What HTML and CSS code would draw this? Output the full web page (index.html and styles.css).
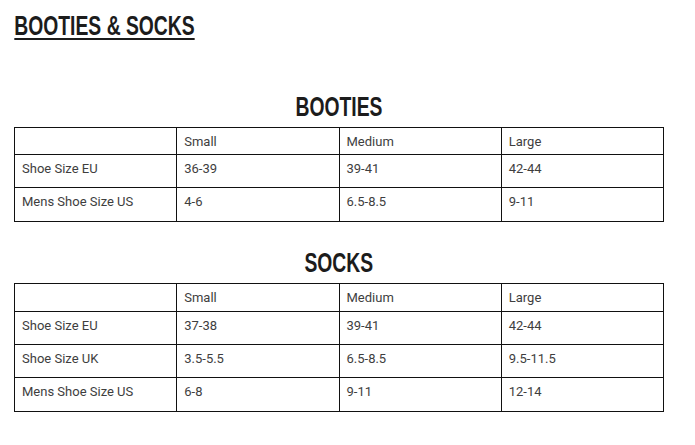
FILE: index.html
```html
<!DOCTYPE html>
<html>
<head>
<meta charset="utf-8">
<link rel="stylesheet" href="styles.css">
</head>
<body>
<div class="page">
  <h1 class="title"><span class="cond">BOOTIES &amp; SOCKS</span></h1>

  <h2 class="section-title section-first"><span class="cond">BOOTIES</span></h2>
  <table class="size-table">
    <tr class="head-row"><td></td><td>Small</td><td>Medium</td><td>Large</td></tr>
    <tr class="row-a"><td>Shoe Size EU</td><td>36-39</td><td>39-41</td><td>42-44</td></tr>
    <tr class="row-b"><td>Mens Shoe Size US</td><td>4-6</td><td>6.5-8.5</td><td>9-11</td></tr>
  </table>

  <h2 class="section-title section-second"><span class="cond">SOCKS</span></h2>
  <table class="size-table">
    <tr class="head-row head-tall"><td></td><td>Small</td><td>Medium</td><td>Large</td></tr>
    <tr class="row-a"><td>Shoe Size EU</td><td>37-38</td><td>39-41</td><td>42-44</td></tr>
    <tr class="row-a"><td>Shoe Size UK</td><td>3.5-5.5</td><td>6.5-8.5</td><td>9.5-11.5</td></tr>
    <tr class="row-b"><td>Mens Shoe Size US</td><td>6-8</td><td>9-11</td><td>12-14</td></tr>
  </table>
</div>
</body>
</html>
```
FILE: styles.css
```css
html, body {
  margin: 0;
  padding: 0;
  background: #ffffff;
}

body {
  font-family: Roboto, "Liberation Sans", Arial, sans-serif;
  color: #3e3e3e;
}

.page {
  padding-left: 14px;
  width: 650px;
}

.title,
.section-title {
  font-family: "Liberation Sans", Arial, sans-serif;
  font-weight: bold;
  font-size: 28px;
  line-height: 32px;
  color: #1c1c1c;
  margin: 0;
}

.cond {
  display: inline-block;
  transform: scaleX(0.69);
}

.title {
  margin-top: 10px;
}

.title .cond {
  transform-origin: 1px center;
  text-decoration: underline;
  text-decoration-thickness: 2px;
  text-underline-offset: 3px;
}

.section-title {
  text-align: center;
  margin-bottom: 4px;
}

.section-title .cond {
  transform-origin: center center;
}

.section-first {
  margin-top: 49px;
}

.section-second {
  margin-top: 25px;
}

.size-table {
  width: 650px;
  table-layout: fixed;
  border-collapse: collapse;
  font-size: 13px;
  line-height: 16px;
}

.size-table td {
  border: 1px solid #111111;
  vertical-align: top;
  padding: 6px 7px 0 7px;
  box-sizing: border-box;
}

.head-row td {
  height: 27px;
}

.head-tall td {
  height: 28px;
}

.row-a td {
  height: 33px;
}

.row-b td {
  height: 34px;
}
```
